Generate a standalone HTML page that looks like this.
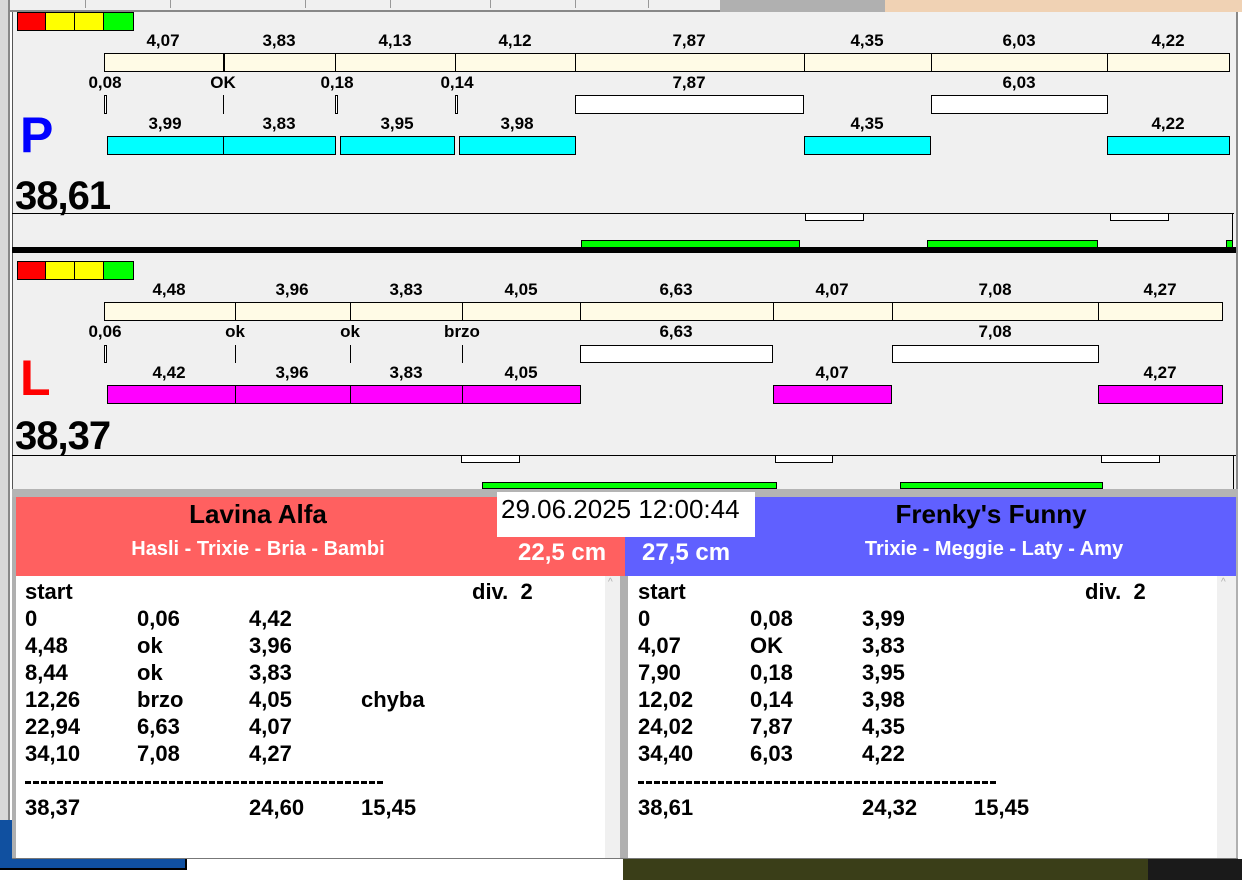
<!DOCTYPE html>
<html><head><meta charset="utf-8"><style>
*{margin:0;padding:0;box-sizing:border-box}
body{width:1242px;height:880px;background:#fff;position:relative;overflow:hidden;font-family:"Liberation Sans",Arial,sans-serif}
div,span{position:absolute}
.b{border:1px solid #000}
.y{background:#fffbe6}
.w{background:#fff}
.c{background:#00ffff}
.m{background:#ff00ff}
.g{background:#00ff00;border:1px solid #000}
.t{font-weight:bold;font-size:17px;color:#000;transform:translateX(-50%);white-space:nowrap;line-height:18px}
.tk{width:3px;border:1px solid #000;background:#fff}
.ln{width:1px;background:#000}
.r{font-weight:bold;font-size:22px;line-height:24px;white-space:nowrap}
</style></head><body>
<!-- top strip -->
<div style="left:0;top:0;width:885px;height:12px;background:#f0f0f0;border-bottom:2px solid #888"></div>
<div style="left:85px;top:0;width:1px;height:8px;background:#999"></div>
<div style="left:170px;top:0;width:1px;height:8px;background:#999"></div>
<div style="left:305px;top:0;width:1px;height:8px;background:#999"></div>
<div style="left:390px;top:0;width:1px;height:8px;background:#999"></div>
<div style="left:490px;top:0;width:1px;height:8px;background:#999"></div>
<div style="left:575px;top:0;width:1px;height:8px;background:#999"></div>
<div style="left:648px;top:0;width:1px;height:8px;background:#999"></div>
<div style="left:720px;top:0;width:165px;height:12px;background:#b0b0b0"></div>
<div style="left:885px;top:0;width:357px;height:12px;background:#f0d2b4"></div>
<!-- left edge -->
<div style="left:0;top:0;width:10px;height:860px;background:#d8d8d8;border-right:2px solid #888"></div>
<!-- main panel -->
<div style="left:12px;top:12px;width:1226px;height:478px;background:#f0f0f0;border-left:1px solid #555"></div>
<div style="left:1236px;top:12px;width:2px;height:480px;background:#888"></div>

<!-- P section -->
<div style="left:17px;top:12px;width:29px;height:19px;background:#f00" class="b"></div>
<div style="left:45px;top:12px;width:30px;height:19px;background:#ff0" class="b"></div>
<div style="left:74px;top:12px;width:30px;height:19px;background:#ff0" class="b"></div>
<div style="left:103px;top:12px;width:31px;height:19px;background:#0f0" class="b"></div>

<span class="t" style="left:163px;top:32px">4,07</span>
<span class="t" style="left:279px;top:32px">3,83</span>
<span class="t" style="left:395px;top:32px">4,13</span>
<span class="t" style="left:515px;top:32px">4,12</span>
<span class="t" style="left:689px;top:32px">7,87</span>
<span class="t" style="left:867px;top:32px">4,35</span>
<span class="t" style="left:1019px;top:32px">6,03</span>
<span class="t" style="left:1168px;top:32px">4,22</span>
<div class="b y" style="left:104px;top:53px;width:120px;height:19px"></div>
<div class="b y" style="left:223px;top:53px;width:113px;height:19px;border-left:2px solid #000"></div>
<div class="b y" style="left:335px;top:53px;width:121px;height:19px"></div>
<div class="b y" style="left:455px;top:53px;width:121px;height:19px"></div>
<div class="b y" style="left:575px;top:53px;width:230px;height:19px"></div>
<div class="b y" style="left:804px;top:53px;width:128px;height:19px"></div>
<div class="b y" style="left:931px;top:53px;width:177px;height:19px"></div>
<div class="b y" style="left:1107px;top:53px;width:123px;height:19px"></div>

<span class="t" style="left:105px;top:74px">0,08</span>
<span class="t" style="left:223px;top:74px">OK</span>
<span class="t" style="left:337px;top:74px">0,18</span>
<span class="t" style="left:457px;top:74px">0,14</span>
<span class="t" style="left:689px;top:74px">7,87</span>
<span class="t" style="left:1019px;top:74px">6,03</span>
<div class="tk" style="left:104px;top:95px;height:19px"></div>
<div class="ln" style="left:223px;top:95px;height:19px"></div>
<div class="tk" style="left:335px;top:95px;height:19px"></div>
<div class="tk" style="left:455px;top:95px;height:19px"></div>
<div class="b w" style="left:575px;top:95px;width:229px;height:19px"></div>
<div class="b w" style="left:931px;top:95px;width:177px;height:19px"></div>

<span style="left:20px;top:105px;font-size:50px;font-weight:bold;color:#0000ff;line-height:60px">P</span>
<span class="t" style="left:165px;top:115px">3,99</span>
<span class="t" style="left:279px;top:115px">3,83</span>
<span class="t" style="left:397px;top:115px">3,95</span>
<span class="t" style="left:517px;top:115px">3,98</span>
<span class="t" style="left:867px;top:115px">4,35</span>
<span class="t" style="left:1168px;top:115px">4,22</span>
<div class="b c" style="left:107px;top:136px;width:117px;height:19px"></div>
<div class="b c" style="left:223px;top:136px;width:113px;height:19px"></div>
<div class="b c" style="left:340px;top:136px;width:115px;height:19px"></div>
<div class="b c" style="left:459px;top:136px;width:117px;height:19px"></div>
<div class="b c" style="left:804px;top:136px;width:127px;height:19px"></div>
<div class="b c" style="left:1107px;top:136px;width:123px;height:19px"></div>

<span style="left:15px;top:173px;font-size:40px;font-weight:bold;line-height:46px;letter-spacing:-1px">38,61</span>
<div style="left:12px;top:213px;width:1222px;height:1px;background:#000"></div>
<div style="left:1232px;top:213px;width:1px;height:35px;background:#000"></div>
<div class="b w" style="left:805px;top:213px;width:59px;height:8px"></div>
<div class="b w" style="left:1110px;top:213px;width:59px;height:8px"></div>
<div class="g" style="left:581px;top:240px;width:219px;height:8px"></div>
<div class="g" style="left:927px;top:240px;width:171px;height:8px"></div>
<div class="g" style="left:1226px;top:240px;width:7px;height:8px"></div>
<div style="left:12px;top:247px;width:1224px;height:6px;background:#000"></div>

<!-- L section -->
<div style="left:17px;top:261px;width:29px;height:19px;background:#f00" class="b"></div>
<div style="left:45px;top:261px;width:30px;height:19px;background:#ff0" class="b"></div>
<div style="left:74px;top:261px;width:30px;height:19px;background:#ff0" class="b"></div>
<div style="left:103px;top:261px;width:31px;height:19px;background:#0f0" class="b"></div>

<span class="t" style="left:169px;top:281px">4,48</span>
<span class="t" style="left:292px;top:281px">3,96</span>
<span class="t" style="left:406px;top:281px">3,83</span>
<span class="t" style="left:521px;top:281px">4,05</span>
<span class="t" style="left:676px;top:281px">6,63</span>
<span class="t" style="left:832px;top:281px">4,07</span>
<span class="t" style="left:995px;top:281px">7,08</span>
<span class="t" style="left:1160px;top:281px">4,27</span>
<div class="b y" style="left:104px;top:302px;width:132px;height:19px"></div>
<div class="b y" style="left:235px;top:302px;width:116px;height:19px"></div>
<div class="b y" style="left:350px;top:302px;width:113px;height:19px"></div>
<div class="b y" style="left:462px;top:302px;width:119px;height:19px"></div>
<div class="b y" style="left:580px;top:302px;width:194px;height:19px"></div>
<div class="b y" style="left:773px;top:302px;width:120px;height:19px"></div>
<div class="b y" style="left:892px;top:302px;width:207px;height:19px"></div>
<div class="b y" style="left:1098px;top:302px;width:125px;height:19px"></div>

<span class="t" style="left:105px;top:323px">0,06</span>
<span class="t" style="left:235px;top:323px">ok</span>
<span class="t" style="left:350px;top:323px">ok</span>
<span class="t" style="left:462px;top:323px">brzo</span>
<span class="t" style="left:676px;top:323px">6,63</span>
<span class="t" style="left:995px;top:323px">7,08</span>
<div class="tk" style="left:104px;top:345px;height:18px"></div>
<div class="ln" style="left:235px;top:345px;height:18px"></div>
<div class="ln" style="left:350px;top:345px;height:18px"></div>
<div class="ln" style="left:462px;top:345px;height:18px"></div>
<div class="b w" style="left:580px;top:345px;width:193px;height:18px"></div>
<div class="b w" style="left:892px;top:345px;width:207px;height:18px"></div>

<span style="left:20px;top:350px;font-size:50px;font-weight:bold;color:#ff0000;line-height:56px">L</span>
<span class="t" style="left:169px;top:364px">4,42</span>
<span class="t" style="left:292px;top:364px">3,96</span>
<span class="t" style="left:406px;top:364px">3,83</span>
<span class="t" style="left:521px;top:364px">4,05</span>
<span class="t" style="left:832px;top:364px">4,07</span>
<span class="t" style="left:1160px;top:364px">4,27</span>
<div class="b m" style="left:107px;top:385px;width:129px;height:19px"></div>
<div class="b m" style="left:235px;top:385px;width:116px;height:19px"></div>
<div class="b m" style="left:350px;top:385px;width:113px;height:19px"></div>
<div class="b m" style="left:462px;top:385px;width:119px;height:19px"></div>
<div class="b m" style="left:773px;top:385px;width:119px;height:19px"></div>
<div class="b m" style="left:1098px;top:385px;width:125px;height:19px"></div>

<span style="left:15px;top:413px;font-size:40px;font-weight:bold;line-height:46px;letter-spacing:-1px">38,37</span>
<div style="left:12px;top:455px;width:1224px;height:1px;background:#000"></div>
<div class="b w" style="left:461px;top:455px;width:59px;height:8px"></div>
<div class="b w" style="left:775px;top:455px;width:58px;height:8px"></div>
<div class="b w" style="left:1101px;top:455px;width:59px;height:8px"></div>
<div class="g" style="left:482px;top:482px;width:295px;height:7px"></div>
<div class="g" style="left:900px;top:482px;width:203px;height:7px"></div>
<div style="left:1233px;top:455px;width:1px;height:35px;background:#000"></div>

<!-- separator -->
<div style="left:12px;top:489px;width:1226px;height:8px;background:#b4b4b4"></div>

<!-- bottom panel -->
<div style="left:12px;top:497px;width:1226px;height:362px;background:#b0b0b0;border-bottom:1px solid #777"></div>
<div style="left:16px;top:497px;width:609px;height:79px;background:#ff6060"></div>
<div style="left:625px;top:497px;width:611px;height:79px;background:#6060ff"></div>
<div style="left:497px;top:492px;width:258px;height:45px;background:#fff"></div>
<span style="left:501px;top:494px;font-size:26px;line-height:30px">29.06.2025 12:00:44</span>
<span style="left:258px;top:499px;transform:translateX(-50%);font-size:26px;font-weight:bold;line-height:30px;white-space:nowrap">Lavina Alfa</span>
<span style="left:991px;top:499px;transform:translateX(-50%);font-size:26px;font-weight:bold;line-height:30px;white-space:nowrap">Frenky's Funny</span>
<span style="left:258px;top:538px;transform:translateX(-50%);font-size:20px;font-weight:bold;color:#fff;line-height:22px;white-space:nowrap">Hasli - Trixie - Bria - Bambi</span>
<span style="left:994px;top:538px;transform:translateX(-50%);font-size:20px;font-weight:bold;color:#fff;line-height:22px;white-space:nowrap">Trixie - Meggie - Laty - Amy</span>
<span style="left:518px;top:539px;font-size:24px;font-weight:bold;color:#fff;line-height:28px">22,5 cm</span>
<span style="left:642px;top:539px;font-size:24px;font-weight:bold;color:#fff;line-height:28px">27,5 cm</span>

<div style="left:16px;top:576px;width:589px;height:282px;background:#fff"></div>
<div style="left:605px;top:576px;width:15px;height:282px;background:#f0f0f0"></div>
<span style="left:608px;top:577px;font-size:10px;color:#aaa">^</span>
<div style="left:620px;top:576px;width:8px;height:282px;background:#b0b0b0"></div>
<div style="left:628px;top:576px;width:589px;height:282px;background:#fff"></div>
<div style="left:1217px;top:576px;width:19px;height:282px;background:#f0f0f0"></div>
<span style="left:1221px;top:577px;font-size:10px;color:#aaa">^</span>

<span class="r" style="left:25px;top:580px">start</span><span class="r" style="left:472px;top:580px">div.&nbsp; 2</span>
<span class="r" style="left:25px;top:607px">0</span><span class="r" style="left:137px;top:607px">0,06</span><span class="r" style="left:249px;top:607px">4,42</span>
<span class="r" style="left:25px;top:634px">4,48</span><span class="r" style="left:137px;top:634px">ok</span><span class="r" style="left:249px;top:634px">3,96</span>
<span class="r" style="left:25px;top:661px">8,44</span><span class="r" style="left:137px;top:661px">ok</span><span class="r" style="left:249px;top:661px">3,83</span>
<span class="r" style="left:25px;top:688px">12,26</span><span class="r" style="left:137px;top:688px">brzo</span><span class="r" style="left:249px;top:688px">4,05</span><span class="r" style="left:361px;top:688px">chyba</span>
<span class="r" style="left:25px;top:715px">22,94</span><span class="r" style="left:137px;top:715px">6,63</span><span class="r" style="left:249px;top:715px">4,07</span>
<span class="r" style="left:25px;top:742px">34,10</span><span class="r" style="left:137px;top:742px">7,08</span><span class="r" style="left:249px;top:742px">4,27</span>
<div style="left:25px;top:781px;width:360px;height:3px;background:repeating-linear-gradient(90deg,#000 0 6px,transparent 6px 8px)"></div>
<span class="r" style="left:25px;top:796px">38,37</span><span class="r" style="left:249px;top:796px">24,60</span><span class="r" style="left:361px;top:796px">15,45</span>

<span class="r" style="left:638px;top:580px">start</span><span class="r" style="left:1085px;top:580px">div.&nbsp; 2</span>
<span class="r" style="left:638px;top:607px">0</span><span class="r" style="left:750px;top:607px">0,08</span><span class="r" style="left:862px;top:607px">3,99</span>
<span class="r" style="left:638px;top:634px">4,07</span><span class="r" style="left:750px;top:634px">OK</span><span class="r" style="left:862px;top:634px">3,83</span>
<span class="r" style="left:638px;top:661px">7,90</span><span class="r" style="left:750px;top:661px">0,18</span><span class="r" style="left:862px;top:661px">3,95</span>
<span class="r" style="left:638px;top:688px">12,02</span><span class="r" style="left:750px;top:688px">0,14</span><span class="r" style="left:862px;top:688px">3,98</span>
<span class="r" style="left:638px;top:715px">24,02</span><span class="r" style="left:750px;top:715px">7,87</span><span class="r" style="left:862px;top:715px">4,35</span>
<span class="r" style="left:638px;top:742px">34,40</span><span class="r" style="left:750px;top:742px">6,03</span><span class="r" style="left:862px;top:742px">4,22</span>
<div style="left:638px;top:781px;width:360px;height:3px;background:repeating-linear-gradient(90deg,#000 0 6px,transparent 6px 8px)"></div>
<span class="r" style="left:638px;top:796px">38,61</span><span class="r" style="left:862px;top:796px">24,32</span><span class="r" style="left:974px;top:796px">15,45</span>

<!-- below -->
<div style="left:0;top:859px;width:187px;height:11px;background:#1050a0;border-right:2px solid #000;border-bottom:2px solid #000"></div>
<div style="left:0;top:820px;width:12px;height:40px;background:#1050a0"></div>
<div style="left:623px;top:859px;width:525px;height:21px;background:#3a3e18"></div>
<div style="left:1148px;top:859px;width:94px;height:21px;background:#1a1a1a"></div>
</body></html>
